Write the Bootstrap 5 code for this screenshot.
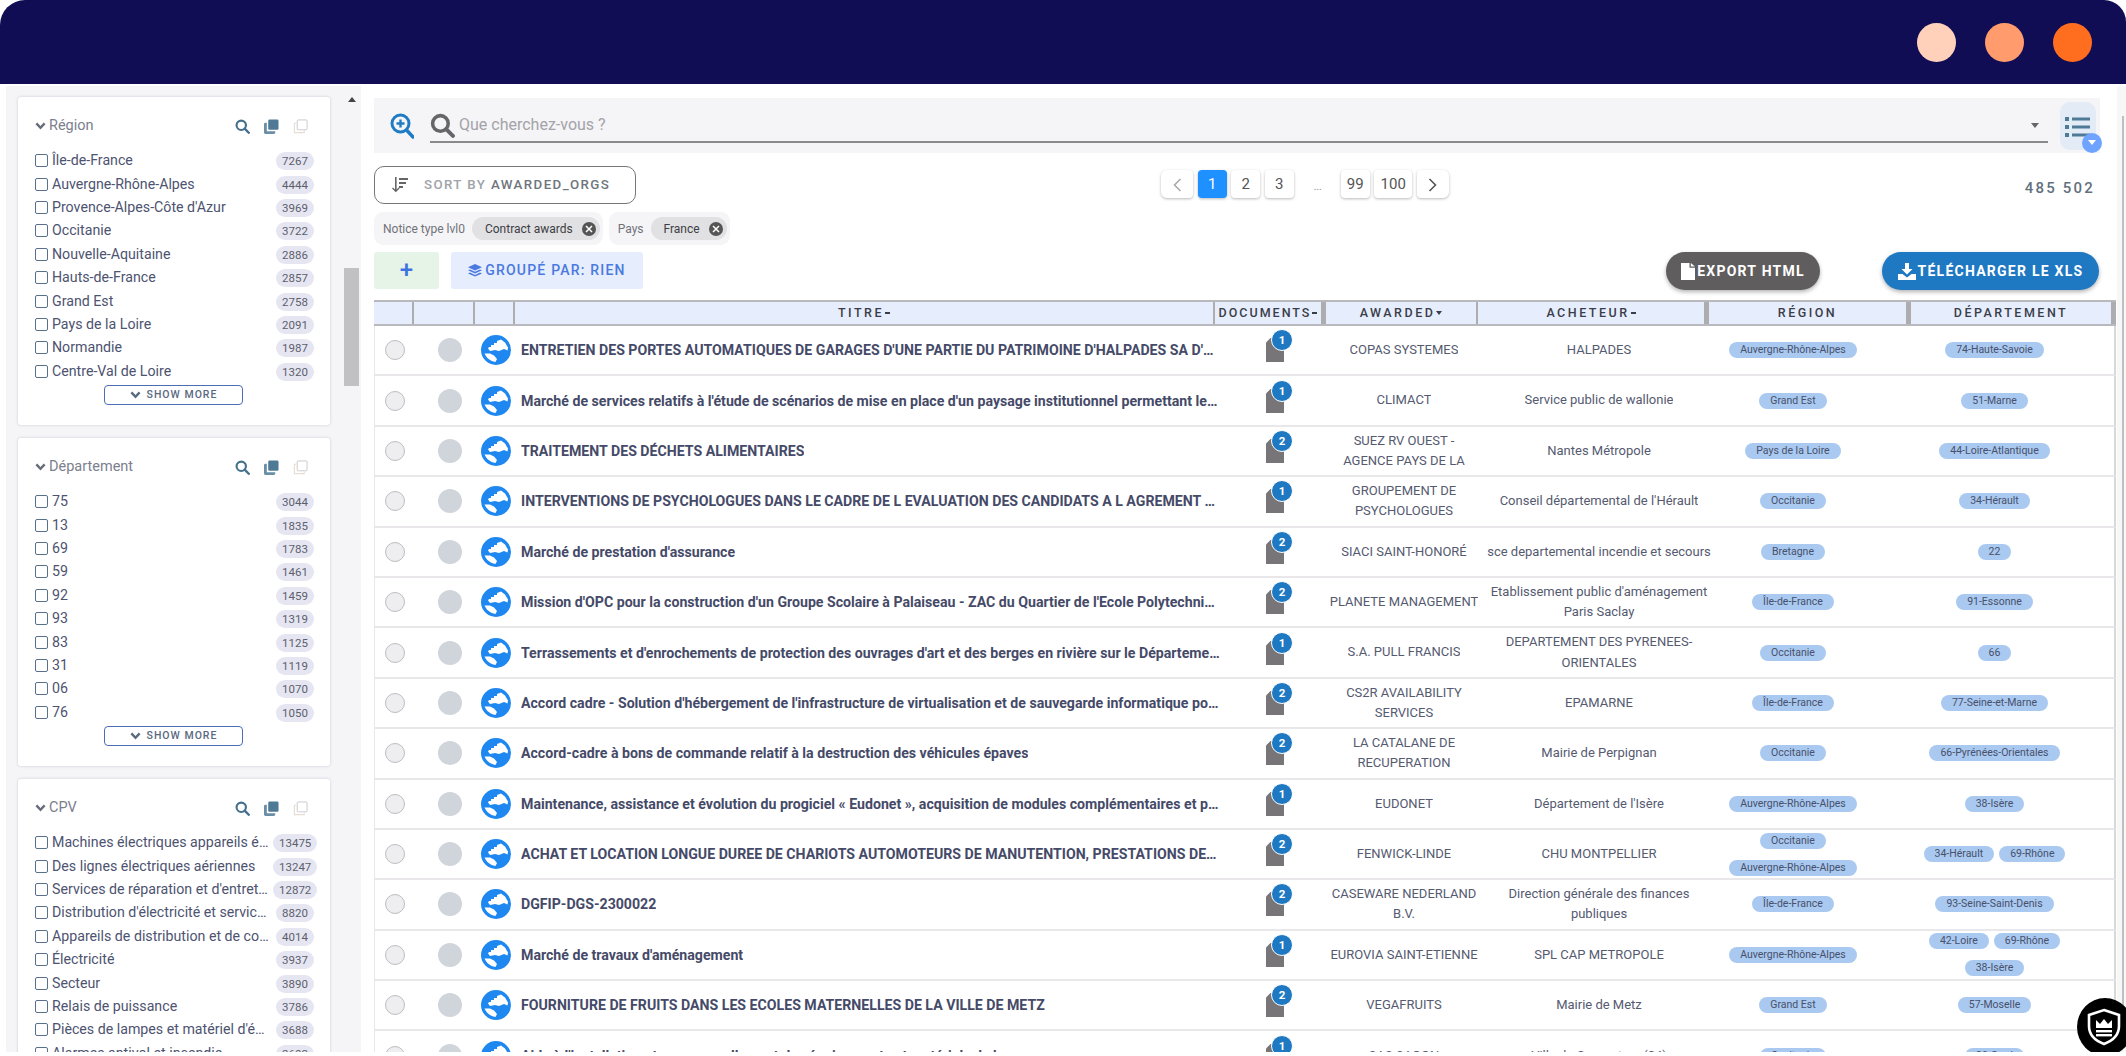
<!DOCTYPE html>
<html lang="fr">
<head>
<meta charset="utf-8">
<title>Résultats</title>
<link rel="stylesheet" href="https://cdn.jsdelivr.net/npm/bootstrap@5.3.0/dist/css/bootstrap.min.css">
<style>
html,body{height:100%;background:#fff;overflow:hidden}
body{font-family:Roboto,"Liberation Sans",sans-serif;font-size:14px;color:#454a68}
.shell{height:1052px;overflow:hidden;position:relative}
.topbar{height:84px;background:#100d54;border-radius:25px 22px 0 0;padding:0 34px 0 0;justify-content:flex-end;gap:29px}
.dot-a,.dot-b,.dot-c{width:39px;height:39px;border-radius:50%}
.dot-a{background:#ffd1ba}.dot-b{background:#ff9b6c}.dot-c{background:#ff6d1f}
.facets{width:355px;margin:2px 0 0 6px;background:#f5f4f7;padding-top:11px}
.facet-col{width:312px;margin-left:12px}
.facet-rail{width:15px;margin-left:14px}
.rail-thumb{height:118px;margin-top:166px;background:#c1c0c2}
.tri-up,.tri-down{width:0;height:0;border-left:4px solid transparent;border-right:4px solid transparent;margin:0 auto}
.tri-up{border-bottom:5px solid #444}
.tri-down{border-top:5px solid #444;margin-top:auto;margin-bottom:0}
.facet{border:0;border-radius:3px;box-shadow:0 0 3px rgba(60,60,90,.22);height:328px;margin-bottom:13px;padding:17px 13px 0 17px;flex:none;background:#fff}
.facet-last{height:420px}
.facet-head{height:24px;margin-bottom:11px;color:#7b808e;font-size:14.5px}
.facet-head .me-1{margin-right:3px!important;color:#666c78}
.facet-tools{gap:14px;margin-left:auto;margin-right:9px}
.facet-row{height:23.4px}
.facet-check.form-check-input{width:13px;height:13px;margin:0 4px 0 0;border:1.5px solid #58708c;border-radius:2px;flex:none}
.facet-label{width:218px;margin-right:3px;line-height:23px;color:#4d5370;font-size:14.2px}
.facet-count{width:44px;text-align:center}
.count-pill{display:inline-block;min-width:38px;padding:0 6px;height:18px;line-height:18px;border-radius:9px;background:#e6e6f2;font-size:11.5px;font-weight:400;color:#5c5f6c}
.more-btn.btn{display:flex;align-items:center;justify-content:center;gap:6px;width:139px;height:20px;margin:2px 0 0 69px;padding:0;border:1.5px solid #4b6db3;border-radius:4px;background:#fff;font-size:10.5px;font-weight:500;letter-spacing:1px;color:#596a7f}
.results{width:1742px;margin-left:13px}
.search-bar{height:55px;margin:14px 16px 13px 0;background:#f5f4f7}
.search-field{margin-left:16px;width:1618px;height:33px;margin-top:1px;border-bottom:2px solid #8a8a8d;gap:4px;color:#a3a3a8;font-size:16px}
.search-plus{margin-left:16px}
.field-tri{margin-left:auto;margin-right:9px;width:0;height:0;border-left:4px solid transparent;border-right:4px solid transparent;border-top:5px solid #666}
.list-toggle{position:relative;width:36px;height:48px;margin-left:12px;border-radius:10px;background:#e3ebf7;display:flex;align-items:flex-start;justify-content:center;padding-top:13px}
.list-drop{position:absolute;right:-6px;bottom:-3px;width:20px;height:20px;border-radius:50%;background:#6ea4ff;display:flex;align-items:center;justify-content:center}
.list-drop span{width:0;height:0;border-left:4px solid transparent;border-right:4px solid transparent;border-top:5px solid #fff}
.sort-row{height:38px;margin-bottom:8px}
.sort-btn.btn{width:262px;height:38px;padding:0 0 0 17px;border:1.5px solid #77777b;border-radius:10px;background:#fff;display:flex;align-items:center;gap:16px;font-size:13.3px;font-weight:500;letter-spacing:1.4px;color:#a0a3a8}
.sort-btn b{font-weight:500;color:#6f757d}
.pager{margin:0 0 0 525px;gap:5.5px;height:28px;align-self:flex-start;margin-top:4px}
.pager .page-link{height:28px;line-height:28px;padding:0;text-align:center;border:0;border-radius:4px;background:#fff;color:#555;font-size:15px;box-shadow:0 1px 3px rgba(0,0,0,.28);display:block}
.pager .active .page-link{background:#1e90ff;color:#fff}
.pg-arrow .page-link{width:32.25px}.pg-num .page-link{width:29px}.pg-wide .page-link{width:38px}
.pg-gap{width:37px;text-align:center;color:#888;font-size:10px;line-height:34px}
.total-count{margin-left:auto;margin-right:21px;font-weight:500;font-size:15px;letter-spacing:2.2px;color:#62707f;padding-top:11px}
.chip-row{height:33px;margin-bottom:7px;gap:6px}
.chip-group{height:33px;background:#f5f4f6;border-radius:9px;padding:0 3px 0 9px;gap:7px;font-size:12px;color:#70737a}
.chip-val{height:23px;border-radius:12px;background:#e1e1e3;color:#3d3d44;padding:0 4px 0 13px;gap:9px}
.chip-x{width:14px;height:14px;border-radius:50%;background:#555;color:#fff;display:flex;align-items:center;justify-content:center}
.act-row{height:38px;margin-bottom:10px}
.plus-btn.btn{width:65px;height:37px;padding:0;border:0;border-radius:3px;background:#e6f4e8;color:#3f74e0;font-size:24px;font-weight:500;line-height:37px}
.group-btn.btn{width:192px;height:37px;margin-left:12px;padding:0;border:0;border-radius:3px;background:#e6edfd;color:#4a79df;font-size:14px;font-weight:500;letter-spacing:1.2px;display:flex;align-items:center;justify-content:center;gap:3px}
.pill-export.btn,.pill-xls.btn{height:38px;padding:0;border:0;border-radius:19px;color:#fff;font-size:14px;font-weight:700;letter-spacing:1.25px;display:flex;align-items:center;justify-content:center;gap:2px;box-shadow:0 2px 4px rgba(0,0,0,.3)}
.pill-export.btn{width:154px;margin-left:auto;background:#5f5d5e}
.pill-xls.btn{width:217px;margin:0 17px 0 62px;background:#1e78c2}
.grid-head{height:26px;border:solid #b9b9bd;border-width:2px 0;background:#e6eefe;font-size:12.5px;font-weight:500;letter-spacing:2.5px;color:#3b3d48}
.grid-head>div{height:100%;display:flex;align-items:center;justify-content:center;border-right:2px solid #adacaf;white-space:nowrap}
.grid-head>.sep-thick{border-right-width:5px}
.hc1{width:40px}.hc2{width:61px}.hc3{width:40px}.hc4{width:700px}.hc5{width:111px;letter-spacing:2px}.hc6{width:152px}.hc7{width:231px}.hc8{width:202px}.hc9{width:205px}
.head-tick{display:inline-block;width:5px;height:2px;background:#3b3d48;margin-left:1px}
.head-tri{display:inline-block;margin-left:1px;width:0;height:0;border-left:3px solid transparent;border-right:3px solid transparent;border-top:4px solid #3b3d48}
.grid-row{height:50.4px;border-bottom:2px solid #e9e7ea;border-left:1px solid #e9e7ea;border-right:2px solid #d8d7da;box-sizing:border-box}
.grid-row>div{height:100%;display:flex;align-items:center;justify-content:center;text-align:center;flex:none}
.c1{width:40px}.c2{width:61px;padding-left:9px}.c3{width:40px}
.c4{width:710px}.c5{width:98px}.c6{width:160px;padding:0 5px}.c7{width:230px}.c8{width:158px}.c9{width:245px;padding:0 37px}
.pick.form-check-input{width:20px;height:20px;margin:0;background-color:#eeeef1;border:1px solid #bdbdc2}
.state-disc{width:24px;height:24px;border-radius:50%;background:#d0d5dc}
.grid-row>.c4{justify-content:flex-start;padding:0 6px 0 5px}
.row-title{font-weight:700;font-size:14.15px;color:#454a68;line-height:20px}
.doc-wrap{position:relative;width:18px;height:24px}
.doc-count{position:absolute;top:-9px;left:5px;width:22px;height:22px;border-radius:50%;background:#1e78c2;border:1px solid #fff;color:#fff;font-size:11.5px;font-weight:700;line-height:20px;text-align:center}
.org{display:block;font-size:13px;line-height:20.3px;color:#555a70;max-height:40.6px;overflow:hidden}
.tag-wrap{display:flex;flex-wrap:wrap;justify-content:center;column-gap:5px}
.tag-pill{height:16px;line-height:16px;margin:5.5px 0;padding:0 11px;border-radius:8px;background:#a9c9f1;font-size:10.5px;font-weight:400;color:#48506a;white-space:nowrap}
.page-rail{width:9px;margin-left:1px;background:#f7f7f8;margin-top:2px}
.page-thumb{width:2px;margin:30px 0 0 5px;height:900px;background:#bfbfc1}
.shield-fab{position:absolute;left:2077px;top:998px;width:56px;height:58px;border-radius:50%;background:#000;display:flex;align-items:center;padding-left:9px}
</style>
</head>
<body>
<svg width="0" height="0" class="d-none" aria-hidden="true">
<symbol id="i-search" viewBox="0 0 24 24"><circle cx="10" cy="10" r="7.5" fill="none" stroke="currentColor" stroke-width="3.4"/><path d="M15.5 15.5 22 22" stroke="currentColor" stroke-width="3.8" stroke-linecap="round"/></symbol>
<symbol id="i-stack" viewBox="0 0 16 16"><rect x="4.5" y="0.5" width="11" height="11" rx="1.5" fill="currentColor"/><path d="M3 4H1.5A1.5 1.5 0 0 0 0 5.5V14.5A1.5 1.5 0 0 0 1.5 16H10.5A1.5 1.5 0 0 0 12 14.5V13H3Z" fill="currentColor" opacity=".85"/></symbol>
<symbol id="i-copy" viewBox="0 0 16 16"><rect x="4.5" y="1" width="10.5" height="10.5" rx="1" fill="#fff" stroke="#c9c9cf" stroke-width="1"/><path d="M3.5 4.5H1.5V14.5H12V12.5" fill="none" stroke="#e8ddd2" stroke-width="1.2"/></symbol>
<symbol id="i-chev" viewBox="0 0 12 8"><path d="M1.5 1.2 6 6 10.5 1.2" fill="none" stroke="currentColor" stroke-width="2.6"/></symbol>
<symbol id="i-globe" viewBox="0 0 30 30"><circle cx="15" cy="15" r="15" fill="#1e88f0"/><path d="M7 13.5 8 12H10V10H13V8H16V6L20 4.5 24 7.5 27 12.5 26.5 15.5 23 14 18 16 14 15 9 16Z" fill="#fff"/><path d="M3.5 18.5H9L13 20.5 16 24 14.5 27C9 26 5.5 23 3.5 18.5Z" fill="#fff"/></symbol>
<symbol id="i-doc" viewBox="0 0 18 24"><path d="M4.5 0H18V24H0V4.5Z" fill="#777577"/></symbol>
</svg>
<div class="shell">
  <nav class="navbar topbar">
    <span class="dot-a"></span><span class="dot-b"></span><span class="dot-c"></span>
  </nav>
  <div class="d-flex">
    <aside class="facets d-flex">
      <div class="facet-col d-flex flex-column">
        <section class="card facet">
          <div class="facet-head d-flex align-items-center">
            <svg width="11" height="8" class="me-1"><use href="#i-chev"/></svg><span>Région</span>
            <div class="facet-tools d-flex align-items-center">
              <svg width="15" height="15" style="color:#44708c"><use href="#i-search"/></svg>
              <svg width="15" height="15" style="color:#4f7a96"><use href="#i-stack"/></svg>
              <svg width="15" height="15"><use href="#i-copy"/></svg>
            </div>
          </div>
          <div class="facet-row d-flex align-items-center"><input class="facet-check form-check-input" type="checkbox"><span class="facet-label text-truncate">Île-de-France</span><span class="facet-count"><span class="count-pill">7267</span></span></div>
          <div class="facet-row d-flex align-items-center"><input class="facet-check form-check-input" type="checkbox"><span class="facet-label text-truncate">Auvergne-Rhône-Alpes</span><span class="facet-count"><span class="count-pill">4444</span></span></div>
          <div class="facet-row d-flex align-items-center"><input class="facet-check form-check-input" type="checkbox"><span class="facet-label text-truncate">Provence-Alpes-Côte d'Azur</span><span class="facet-count"><span class="count-pill">3969</span></span></div>
          <div class="facet-row d-flex align-items-center"><input class="facet-check form-check-input" type="checkbox"><span class="facet-label text-truncate">Occitanie</span><span class="facet-count"><span class="count-pill">3722</span></span></div>
          <div class="facet-row d-flex align-items-center"><input class="facet-check form-check-input" type="checkbox"><span class="facet-label text-truncate">Nouvelle-Aquitaine</span><span class="facet-count"><span class="count-pill">2886</span></span></div>
          <div class="facet-row d-flex align-items-center"><input class="facet-check form-check-input" type="checkbox"><span class="facet-label text-truncate">Hauts-de-France</span><span class="facet-count"><span class="count-pill">2857</span></span></div>
          <div class="facet-row d-flex align-items-center"><input class="facet-check form-check-input" type="checkbox"><span class="facet-label text-truncate">Grand Est</span><span class="facet-count"><span class="count-pill">2758</span></span></div>
          <div class="facet-row d-flex align-items-center"><input class="facet-check form-check-input" type="checkbox"><span class="facet-label text-truncate">Pays de la Loire</span><span class="facet-count"><span class="count-pill">2091</span></span></div>
          <div class="facet-row d-flex align-items-center"><input class="facet-check form-check-input" type="checkbox"><span class="facet-label text-truncate">Normandie</span><span class="facet-count"><span class="count-pill">1987</span></span></div>
          <div class="facet-row d-flex align-items-center"><input class="facet-check form-check-input" type="checkbox"><span class="facet-label text-truncate">Centre-Val de Loire</span><span class="facet-count"><span class="count-pill">1320</span></span></div>
          <button class="more-btn btn" type="button"><svg width="11" height="8"><use href="#i-chev"/></svg>SHOW MORE</button>
        </section>
        <section class="card facet">
          <div class="facet-head d-flex align-items-center">
            <svg width="11" height="8" class="me-1"><use href="#i-chev"/></svg><span>Département</span>
            <div class="facet-tools d-flex align-items-center">
              <svg width="15" height="15" style="color:#44708c"><use href="#i-search"/></svg>
              <svg width="15" height="15" style="color:#4f7a96"><use href="#i-stack"/></svg>
              <svg width="15" height="15"><use href="#i-copy"/></svg>
            </div>
          </div>
          <div class="facet-row d-flex align-items-center"><input class="facet-check form-check-input" type="checkbox"><span class="facet-label text-truncate">75</span><span class="facet-count"><span class="count-pill">3044</span></span></div>
          <div class="facet-row d-flex align-items-center"><input class="facet-check form-check-input" type="checkbox"><span class="facet-label text-truncate">13</span><span class="facet-count"><span class="count-pill">1835</span></span></div>
          <div class="facet-row d-flex align-items-center"><input class="facet-check form-check-input" type="checkbox"><span class="facet-label text-truncate">69</span><span class="facet-count"><span class="count-pill">1783</span></span></div>
          <div class="facet-row d-flex align-items-center"><input class="facet-check form-check-input" type="checkbox"><span class="facet-label text-truncate">59</span><span class="facet-count"><span class="count-pill">1461</span></span></div>
          <div class="facet-row d-flex align-items-center"><input class="facet-check form-check-input" type="checkbox"><span class="facet-label text-truncate">92</span><span class="facet-count"><span class="count-pill">1459</span></span></div>
          <div class="facet-row d-flex align-items-center"><input class="facet-check form-check-input" type="checkbox"><span class="facet-label text-truncate">93</span><span class="facet-count"><span class="count-pill">1319</span></span></div>
          <div class="facet-row d-flex align-items-center"><input class="facet-check form-check-input" type="checkbox"><span class="facet-label text-truncate">83</span><span class="facet-count"><span class="count-pill">1125</span></span></div>
          <div class="facet-row d-flex align-items-center"><input class="facet-check form-check-input" type="checkbox"><span class="facet-label text-truncate">31</span><span class="facet-count"><span class="count-pill">1119</span></span></div>
          <div class="facet-row d-flex align-items-center"><input class="facet-check form-check-input" type="checkbox"><span class="facet-label text-truncate">06</span><span class="facet-count"><span class="count-pill">1070</span></span></div>
          <div class="facet-row d-flex align-items-center"><input class="facet-check form-check-input" type="checkbox"><span class="facet-label text-truncate">76</span><span class="facet-count"><span class="count-pill">1050</span></span></div>
          <button class="more-btn btn" type="button"><svg width="11" height="8"><use href="#i-chev"/></svg>SHOW MORE</button>
        </section>
        <section class="card facet facet-last">
          <div class="facet-head d-flex align-items-center">
            <svg width="11" height="8" class="me-1"><use href="#i-chev"/></svg><span>CPV</span>
            <div class="facet-tools d-flex align-items-center">
              <svg width="15" height="15" style="color:#44708c"><use href="#i-search"/></svg>
              <svg width="15" height="15" style="color:#4f7a96"><use href="#i-stack"/></svg>
              <svg width="15" height="15"><use href="#i-copy"/></svg>
            </div>
          </div>
          <div class="facet-row d-flex align-items-center"><input class="facet-check form-check-input" type="checkbox"><span class="facet-label text-truncate">Machines électriques appareils électriques</span><span class="facet-count"><span class="count-pill">13475</span></span></div>
          <div class="facet-row d-flex align-items-center"><input class="facet-check form-check-input" type="checkbox"><span class="facet-label text-truncate">Des lignes électriques aériennes</span><span class="facet-count"><span class="count-pill">13247</span></span></div>
          <div class="facet-row d-flex align-items-center"><input class="facet-check form-check-input" type="checkbox"><span class="facet-label text-truncate">Services de réparation et d'entretien</span><span class="facet-count"><span class="count-pill">12872</span></span></div>
          <div class="facet-row d-flex align-items-center"><input class="facet-check form-check-input" type="checkbox"><span class="facet-label text-truncate">Distribution d'électricité et services connexes</span><span class="facet-count"><span class="count-pill">8820</span></span></div>
          <div class="facet-row d-flex align-items-center"><input class="facet-check form-check-input" type="checkbox"><span class="facet-label text-truncate">Appareils de distribution et de commande</span><span class="facet-count"><span class="count-pill">4014</span></span></div>
          <div class="facet-row d-flex align-items-center"><input class="facet-check form-check-input" type="checkbox"><span class="facet-label text-truncate">Électricité</span><span class="facet-count"><span class="count-pill">3937</span></span></div>
          <div class="facet-row d-flex align-items-center"><input class="facet-check form-check-input" type="checkbox"><span class="facet-label text-truncate">Secteur</span><span class="facet-count"><span class="count-pill">3890</span></span></div>
          <div class="facet-row d-flex align-items-center"><input class="facet-check form-check-input" type="checkbox"><span class="facet-label text-truncate">Relais de puissance</span><span class="facet-count"><span class="count-pill">3786</span></span></div>
          <div class="facet-row d-flex align-items-center"><input class="facet-check form-check-input" type="checkbox"><span class="facet-label text-truncate">Pièces de lampes et matériel d'éclairage</span><span class="facet-count"><span class="count-pill">3688</span></span></div>
          <div class="facet-row d-flex align-items-center"><input class="facet-check form-check-input" type="checkbox"><span class="facet-label text-truncate">Alarmes antivol et incendie</span><span class="facet-count"><span class="count-pill">2602</span></span></div>
        </section>
      </div>
      <div class="facet-rail d-flex flex-column">
        <div class="tri-up"></div>
        <div class="rail-thumb"></div>
        <div class="tri-down"></div>
      </div>
    </aside>
    <main class="results">
      <div class="search-bar d-flex align-items-center">
        <svg class="search-plus" width="24" height="26" viewBox="0 0 24 26" style="color:#1f7cc4"><circle cx="10.5" cy="10.5" r="8.5" fill="none" stroke="currentColor" stroke-width="3"/><path d="M16.5 17 23 24" stroke="currentColor" stroke-width="3.4" stroke-linecap="round"/><path d="M6.5 10.5h8M10.5 6.5v8" stroke="currentColor" stroke-width="2.4"/></svg>
        <div class="search-field d-flex align-items-center">
          <svg width="25" height="25" style="color:#66666a;flex:none"><use href="#i-search"/></svg>
          <span>Que cherchez-vous ?</span>
          <span class="field-tri"></span>
        </div>
        <div class="list-toggle">
          <svg width="26" height="24" viewBox="0 0 26 24" fill="#4f7a96"><rect x="0" y="2" width="4" height="4"/><rect x="7" y="2.5" width="18" height="3"/><rect x="0" y="10" width="4" height="4"/><rect x="7" y="10.5" width="18" height="3"/><rect x="0" y="18" width="4" height="4"/><rect x="7" y="18.5" width="18" height="3"/></svg>
          <span class="list-drop"><span></span></span>
        </div>
      </div>
      <div class="sort-row d-flex">
        <button class="sort-btn btn" type="button">
          <svg width="16" height="16" viewBox="0 0 16 16" fill="#666"><path d="M3 0h1.6v12.5l2-2 1 1L3.8 15.3 0 11.5l1-1 2 2Z"/><rect x="7" y="1" width="9" height="2"/><rect x="7" y="5" width="7" height="2"/><rect x="7" y="9" width="4" height="2"/></svg>
          <span>SORT BY <b>AWARDED_ORGS</b></span>
        </button>
        <ul class="pagination pager">
          <li class="page-item pg-arrow"><a class="page-link" href="#"><svg width="9" height="14" viewBox="0 0 9 14"><path d="M7.5 1 1.5 7l6 6" fill="none" stroke="#aaa" stroke-width="1.6"/></svg></a></li>
          <li class="page-item pg-num active"><a class="page-link" href="#">1</a></li>
          <li class="page-item pg-num"><a class="page-link" href="#">2</a></li>
          <li class="page-item pg-num"><a class="page-link" href="#">3</a></li>
          <li class="pg-gap">...</li>
          <li class="page-item pg-num"><a class="page-link" href="#">99</a></li>
          <li class="page-item pg-wide"><a class="page-link" href="#">100</a></li>
          <li class="page-item pg-arrow"><a class="page-link" href="#"><svg width="9" height="14" viewBox="0 0 9 14"><path d="M1.5 1l6 6-6 6" fill="none" stroke="#555" stroke-width="1.6"/></svg></a></li>
        </ul>
        <span class="total-count">485 502</span>
      </div>
      <div class="chip-row d-flex">
        <div class="chip-group d-flex align-items-center"><span>Notice type lvl0</span><span class="chip-val d-flex align-items-center">Contract awards<span class="chip-x"><svg width="8" height="8" viewBox="0 0 8 8"><path d="M1 1l6 6M7 1 1 7" stroke="#fff" stroke-width="1.5"/></svg></span></span></div>
        <div class="chip-group d-flex align-items-center"><span>Pays</span><span class="chip-val d-flex align-items-center">France<span class="chip-x"><svg width="8" height="8" viewBox="0 0 8 8"><path d="M1 1l6 6M7 1 1 7" stroke="#fff" stroke-width="1.5"/></svg></span></span></div>
      </div>
      <div class="act-row d-flex">
        <button class="plus-btn btn" type="button">+</button>
        <button class="group-btn btn" type="button"><svg width="14" height="14" viewBox="0 0 14 14" fill="#4a79df"><path d="M7 0 14 3.2 7 6.4 0 3.2Z"/><path d="M0 6.2 2 5.4 7 7.7 12 5.4 14 6.2 7 9.4Z"/><path d="M0 9.4 2 8.6 7 11 12 8.6 14 9.4 7 12.6Z"/></svg>GROUPÉ PAR: RIEN</button>
        <button class="pill-export btn" type="button"><svg width="14" height="17" viewBox="0 0 14 17" fill="#fff"><path d="M0 0h8.5v4.8H14V17H0Z"/><path d="M9.8 0 14 3.6H9.8Z"/></svg>EXPORT HTML</button>
        <button class="pill-xls btn" type="button"><svg width="18" height="17" viewBox="0 0 18 17" fill="#fff"><path d="M7 0h4v6h3.5L9 11.5 3.5 6H7Z"/><path d="M0 11h4.5L9 14.5 13.5 11H18v6H0Z"/></svg>TÉLÉCHARGER LE XLS</button>
      </div>
      <div class="grid-head d-flex">
        <div class="hc1"></div><div class="hc2"></div><div class="hc3"></div>
        <div class="hc4">TITRE<i class="head-tick"></i></div>
        <div class="hc5 sep-thick">DOCUMENTS<i class="head-tick"></i></div>
        <div class="hc6">AWARDED<i class="head-tri"></i></div>
        <div class="hc7 sep-thick">ACHETEUR<i class="head-tick"></i></div>
        <div class="hc8 sep-thick">RÉGION</div>
        <div class="hc9 sep-thick">DÉPARTEMENT</div>
      </div>
      <div class="grid-row d-flex">
        <div class="c1"><input class="pick form-check-input" type="radio"></div><div class="c2"><span class="state-disc"></span></div><div class="c3"><svg width="30" height="30"><use href="#i-globe"/></svg></div>
        <div class="c4"><span class="row-title text-truncate">ENTRETIEN DES PORTES AUTOMATIQUES DE GARAGES D'UNE PARTIE DU PATRIMOINE D'HALPADES SA D'HABITATIONS</span></div>
        <div class="c5"><span class="doc-wrap"><svg width="18" height="24"><use href="#i-doc"/></svg><span class="doc-count">1</span></span></div>
        <div class="c6"><span class="org">COPAS SYSTEMES</span></div><div class="c7"><span class="org">HALPADES</span></div>
        <div class="c8"><div class="tag-wrap"><span class="tag-pill">Auvergne-Rhône-Alpes</span></div></div>
        <div class="c9"><div class="tag-wrap"><span class="tag-pill">74-Haute-Savoie</span></div></div>
      </div>
      <div class="grid-row d-flex">
        <div class="c1"><input class="pick form-check-input" type="radio"></div><div class="c2"><span class="state-disc"></span></div><div class="c3"><svg width="30" height="30"><use href="#i-globe"/></svg></div>
        <div class="c4"><span class="row-title text-truncate">Marché de services relatifs à l'étude de scénarios de mise en place d'un paysage institutionnel permettant le développement</span></div>
        <div class="c5"><span class="doc-wrap"><svg width="18" height="24"><use href="#i-doc"/></svg><span class="doc-count">1</span></span></div>
        <div class="c6"><span class="org">CLIMACT</span></div><div class="c7"><span class="org">Service public de wallonie</span></div>
        <div class="c8"><div class="tag-wrap"><span class="tag-pill">Grand Est</span></div></div>
        <div class="c9"><div class="tag-wrap"><span class="tag-pill">51-Marne</span></div></div>
      </div>
      <div class="grid-row d-flex">
        <div class="c1"><input class="pick form-check-input" type="radio"></div><div class="c2"><span class="state-disc"></span></div><div class="c3"><svg width="30" height="30"><use href="#i-globe"/></svg></div>
        <div class="c4"><span class="row-title text-truncate">TRAITEMENT DES DÉCHETS ALIMENTAIRES</span></div>
        <div class="c5"><span class="doc-wrap"><svg width="18" height="24"><use href="#i-doc"/></svg><span class="doc-count">2</span></span></div>
        <div class="c6"><span class="org">SUEZ RV OUEST - AGENCE PAYS DE LA LOIRE</span></div><div class="c7"><span class="org">Nantes Métropole</span></div>
        <div class="c8"><div class="tag-wrap"><span class="tag-pill">Pays de la Loire</span></div></div>
        <div class="c9"><div class="tag-wrap"><span class="tag-pill">44-Loire-Atlantique</span></div></div>
      </div>
      <div class="grid-row d-flex">
        <div class="c1"><input class="pick form-check-input" type="radio"></div><div class="c2"><span class="state-disc"></span></div><div class="c3"><svg width="30" height="30"><use href="#i-globe"/></svg></div>
        <div class="c4"><span class="row-title text-truncate">INTERVENTIONS DE PSYCHOLOGUES DANS LE CADRE DE L EVALUATION DES CANDIDATS A L AGREMENT DES ASSISTANTS</span></div>
        <div class="c5"><span class="doc-wrap"><svg width="18" height="24"><use href="#i-doc"/></svg><span class="doc-count">1</span></span></div>
        <div class="c6"><span class="org">GROUPEMENT DE PSYCHOLOGUES</span></div><div class="c7"><span class="org">Conseil départemental de l'Hérault</span></div>
        <div class="c8"><div class="tag-wrap"><span class="tag-pill">Occitanie</span></div></div>
        <div class="c9"><div class="tag-wrap"><span class="tag-pill">34-Hérault</span></div></div>
      </div>
      <div class="grid-row d-flex">
        <div class="c1"><input class="pick form-check-input" type="radio"></div><div class="c2"><span class="state-disc"></span></div><div class="c3"><svg width="30" height="30"><use href="#i-globe"/></svg></div>
        <div class="c4"><span class="row-title text-truncate">Marché de prestation d'assurance</span></div>
        <div class="c5"><span class="doc-wrap"><svg width="18" height="24"><use href="#i-doc"/></svg><span class="doc-count">2</span></span></div>
        <div class="c6"><span class="org">SIACI SAINT-HONORÉ</span></div><div class="c7"><span class="org">sce departemental incendie et secours</span></div>
        <div class="c8"><div class="tag-wrap"><span class="tag-pill">Bretagne</span></div></div>
        <div class="c9"><div class="tag-wrap"><span class="tag-pill">22</span></div></div>
      </div>
      <div class="grid-row d-flex">
        <div class="c1"><input class="pick form-check-input" type="radio"></div><div class="c2"><span class="state-disc"></span></div><div class="c3"><svg width="30" height="30"><use href="#i-globe"/></svg></div>
        <div class="c4"><span class="row-title text-truncate">Mission d'OPC pour la construction d'un Groupe Scolaire à Palaiseau - ZAC du Quartier de l'Ecole Polytechnique de Paris</span></div>
        <div class="c5"><span class="doc-wrap"><svg width="18" height="24"><use href="#i-doc"/></svg><span class="doc-count">2</span></span></div>
        <div class="c6"><span class="org">PLANETE MANAGEMENT</span></div><div class="c7"><span class="org">Etablissement public d'aménagement Paris Saclay</span></div>
        <div class="c8"><div class="tag-wrap"><span class="tag-pill">Île-de-France</span></div></div>
        <div class="c9"><div class="tag-wrap"><span class="tag-pill">91-Essonne</span></div></div>
      </div>
      <div class="grid-row d-flex">
        <div class="c1"><input class="pick form-check-input" type="radio"></div><div class="c2"><span class="state-disc"></span></div><div class="c3"><svg width="30" height="30"><use href="#i-globe"/></svg></div>
        <div class="c4"><span class="row-title text-truncate">Terrassements et d'enrochements de protection des ouvrages d'art et des berges en rivière sur le Département des Pyrénées</span></div>
        <div class="c5"><span class="doc-wrap"><svg width="18" height="24"><use href="#i-doc"/></svg><span class="doc-count">1</span></span></div>
        <div class="c6"><span class="org">S.A. PULL FRANCIS</span></div><div class="c7"><span class="org">DEPARTEMENT DES PYRENEES-ORIENTALES</span></div>
        <div class="c8"><div class="tag-wrap"><span class="tag-pill">Occitanie</span></div></div>
        <div class="c9"><div class="tag-wrap"><span class="tag-pill">66</span></div></div>
      </div>
      <div class="grid-row d-flex">
        <div class="c1"><input class="pick form-check-input" type="radio"></div><div class="c2"><span class="state-disc"></span></div><div class="c3"><svg width="30" height="30"><use href="#i-globe"/></svg></div>
        <div class="c4"><span class="row-title text-truncate">Accord cadre - Solution d'hébergement de l'infrastructure de virtualisation et de sauvegarde informatique pour les services</span></div>
        <div class="c5"><span class="doc-wrap"><svg width="18" height="24"><use href="#i-doc"/></svg><span class="doc-count">2</span></span></div>
        <div class="c6"><span class="org">CS2R AVAILABILITY SERVICES</span></div><div class="c7"><span class="org">EPAMARNE</span></div>
        <div class="c8"><div class="tag-wrap"><span class="tag-pill">Île-de-France</span></div></div>
        <div class="c9"><div class="tag-wrap"><span class="tag-pill">77-Seine-et-Marne</span></div></div>
      </div>
      <div class="grid-row d-flex">
        <div class="c1"><input class="pick form-check-input" type="radio"></div><div class="c2"><span class="state-disc"></span></div><div class="c3"><svg width="30" height="30"><use href="#i-globe"/></svg></div>
        <div class="c4"><span class="row-title text-truncate">Accord-cadre à bons de commande relatif à la destruction des véhicules épaves</span></div>
        <div class="c5"><span class="doc-wrap"><svg width="18" height="24"><use href="#i-doc"/></svg><span class="doc-count">2</span></span></div>
        <div class="c6"><span class="org">LA CATALANE DE RECUPERATION</span></div><div class="c7"><span class="org">Mairie de Perpignan</span></div>
        <div class="c8"><div class="tag-wrap"><span class="tag-pill">Occitanie</span></div></div>
        <div class="c9"><div class="tag-wrap"><span class="tag-pill">66-Pyrénées-Orientales</span></div></div>
      </div>
      <div class="grid-row d-flex">
        <div class="c1"><input class="pick form-check-input" type="radio"></div><div class="c2"><span class="state-disc"></span></div><div class="c3"><svg width="30" height="30"><use href="#i-globe"/></svg></div>
        <div class="c4"><span class="row-title text-truncate">Maintenance, assistance et évolution du progiciel « Eudonet », acquisition de modules complémentaires et prestations associées</span></div>
        <div class="c5"><span class="doc-wrap"><svg width="18" height="24"><use href="#i-doc"/></svg><span class="doc-count">1</span></span></div>
        <div class="c6"><span class="org">EUDONET</span></div><div class="c7"><span class="org">Département de l'Isère</span></div>
        <div class="c8"><div class="tag-wrap"><span class="tag-pill">Auvergne-Rhône-Alpes</span></div></div>
        <div class="c9"><div class="tag-wrap"><span class="tag-pill">38-Isère</span></div></div>
      </div>
      <div class="grid-row d-flex">
        <div class="c1"><input class="pick form-check-input" type="radio"></div><div class="c2"><span class="state-disc"></span></div><div class="c3"><svg width="30" height="30"><use href="#i-globe"/></svg></div>
        <div class="c4"><span class="row-title text-truncate">ACHAT ET LOCATION LONGUE DUREE DE CHARIOTS AUTOMOTEURS DE MANUTENTION, PRESTATIONS DE MAINTENANCE</span></div>
        <div class="c5"><span class="doc-wrap"><svg width="18" height="24"><use href="#i-doc"/></svg><span class="doc-count">2</span></span></div>
        <div class="c6"><span class="org">FENWICK-LINDE</span></div><div class="c7"><span class="org">CHU MONTPELLIER</span></div>
        <div class="c8"><div class="tag-wrap"><span class="tag-pill">Occitanie</span><span class="tag-pill">Auvergne-Rhône-Alpes</span></div></div>
        <div class="c9"><div class="tag-wrap"><span class="tag-pill">34-Hérault</span><span class="tag-pill">69-Rhône</span></div></div>
      </div>
      <div class="grid-row d-flex">
        <div class="c1"><input class="pick form-check-input" type="radio"></div><div class="c2"><span class="state-disc"></span></div><div class="c3"><svg width="30" height="30"><use href="#i-globe"/></svg></div>
        <div class="c4"><span class="row-title text-truncate">DGFIP-DGS-2300022</span></div>
        <div class="c5"><span class="doc-wrap"><svg width="18" height="24"><use href="#i-doc"/></svg><span class="doc-count">2</span></span></div>
        <div class="c6"><span class="org">CASEWARE NEDERLAND B.V.</span></div><div class="c7"><span class="org">Direction générale des finances publiques</span></div>
        <div class="c8"><div class="tag-wrap"><span class="tag-pill">Île-de-France</span></div></div>
        <div class="c9"><div class="tag-wrap"><span class="tag-pill">93-Seine-Saint-Denis</span></div></div>
      </div>
      <div class="grid-row d-flex">
        <div class="c1"><input class="pick form-check-input" type="radio"></div><div class="c2"><span class="state-disc"></span></div><div class="c3"><svg width="30" height="30"><use href="#i-globe"/></svg></div>
        <div class="c4"><span class="row-title text-truncate">Marché de travaux d'aménagement</span></div>
        <div class="c5"><span class="doc-wrap"><svg width="18" height="24"><use href="#i-doc"/></svg><span class="doc-count">1</span></span></div>
        <div class="c6"><span class="org">EUROVIA SAINT-ETIENNE</span></div><div class="c7"><span class="org">SPL CAP METROPOLE</span></div>
        <div class="c8"><div class="tag-wrap"><span class="tag-pill">Auvergne-Rhône-Alpes</span></div></div>
        <div class="c9"><div class="tag-wrap"><span class="tag-pill">42-Loire</span><span class="tag-pill">69-Rhône</span><span class="tag-pill">38-Isère</span></div></div>
      </div>
      <div class="grid-row d-flex">
        <div class="c1"><input class="pick form-check-input" type="radio"></div><div class="c2"><span class="state-disc"></span></div><div class="c3"><svg width="30" height="30"><use href="#i-globe"/></svg></div>
        <div class="c4"><span class="row-title text-truncate">FOURNITURE DE FRUITS DANS LES ECOLES MATERNELLES DE LA VILLE DE METZ</span></div>
        <div class="c5"><span class="doc-wrap"><svg width="18" height="24"><use href="#i-doc"/></svg><span class="doc-count">2</span></span></div>
        <div class="c6"><span class="org">VEGAFRUITS</span></div><div class="c7"><span class="org">Mairie de Metz</span></div>
        <div class="c8"><div class="tag-wrap"><span class="tag-pill">Grand Est</span></div></div>
        <div class="c9"><div class="tag-wrap"><span class="tag-pill">57-Moselle</span></div></div>
      </div>
      <div class="grid-row d-flex">
        <div class="c1"><input class="pick form-check-input" type="radio"></div><div class="c2"><span class="state-disc"></span></div><div class="c3"><svg width="30" height="30"><use href="#i-globe"/></svg></div>
        <div class="c4"><span class="row-title text-truncate">Aide à l'installation et au renouvellement des équipements et matériels de bureau</span></div>
        <div class="c5"><span class="doc-wrap"><svg width="18" height="24"><use href="#i-doc"/></svg><span class="doc-count">1</span></span></div>
        <div class="c6"><span class="org">SAS SAGON</span></div><div class="c7"><span class="org">Ville de Carpentras (84)</span></div>
        <div class="c8"><div class="tag-wrap"><span class="tag-pill">Occitanie</span></div></div>
        <div class="c9"><div class="tag-wrap"><span class="tag-pill">30-Gard</span></div></div>
      </div>
    </main>
    <div class="page-rail"><div class="page-thumb"></div></div>
  </div>
  <div class="shield-fab"><svg width="36" height="38" viewBox="0 0 36 38"><path d="M18 2 33 7V18C33 27 26 33 18 36 10 33 3 27 3 18V7Z" fill="none" stroke="#fff" stroke-width="2.6"/><path d="M10 12 14 16 18 11 22 16 26 12V20H10Z" fill="#fff"/><rect x="10" y="22" width="16" height="2.4" fill="#fff"/><rect x="10" y="26" width="16" height="2.4" fill="#fff"/></svg></div>
</div>
<script src="https://cdn.jsdelivr.net/npm/bootstrap@5.3.0/dist/js/bootstrap.bundle.min.js"></script>
</body>
</html>
